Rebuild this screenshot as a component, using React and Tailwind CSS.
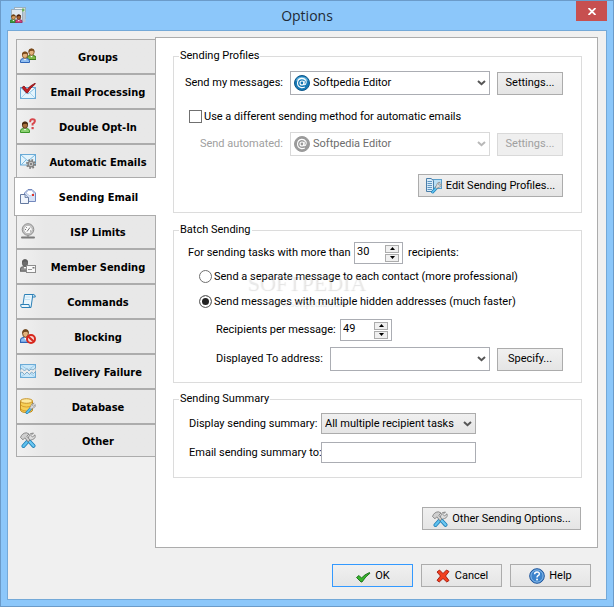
import React, { useState } from 'react';
import clsx from 'clsx';

/* ---------- icons ---------- */

const Icon = ({ children, className }) => (
  <svg width="16" height="16" viewBox="0 0 16 16" aria-hidden="true" className={clsx('shrink-0', className)}>
    {children}
  </svg>
);

const Person = ({ transform, body = '#7fb845', edge = '#3f7a1c', hair = '#7a4a1c', skin = '#e3b27c' }) => (
  <g transform={transform}>
    <path d="M0.5 11.5 V10 Q0.5 7.5 3.5 7.5 H6.5 Q9.5 7.5 9.5 10 V11.5 Z" fill={body} stroke={edge} />
    <path d="M3.5 7.5 L5 9.5 L6.5 7.5 Z" fill="#fff" />
    <ellipse cx="5" cy="4.2" rx="2.6" ry="3.1" fill={skin} stroke={hair} strokeWidth="0.8" />
    <path d="M2 4.6 Q1.6 0.6 5 0.6 Q8.4 0.6 8 4.6 L7 2.8 L3.6 3 Z" fill={hair} />
  </g>
);

const Envelope = ({ y = 3 }) => (
  <g>
    <rect x="0.5" y={y + 0.5} width="15" height="11" fill="#e4f4fc" stroke="#6aaad6" />
    <path d={`M1 ${y + 1} L8 ${y + 7} L15 ${y + 1}`} fill="#fff" stroke="#7ab8e0" />
    <path d={`M1 ${y + 11} L6 ${y + 6} M15 ${y + 11} L10 ${y + 6}`} stroke="#a9d4ee" />
  </g>
);

const GroupsIcon = () => (
  <Icon>
    <Person transform="translate(6.5 0)" />
    <Person transform="translate(0 3)" body="#8fbdf0" edge="#2f66b8" />
  </Icon>
);

const ProcessingIcon = () => (
  <Icon>
    <Envelope y={4} />
    <path d="M2 4.5 L4 3 L7 6.5 Q10 2.5 15 0.3 L15.5 0.8 Q10.5 4.5 7.5 10 H6.5 Z" fill="#c51f22" stroke="#7d0d12" strokeWidth="0.8" />
  </Icon>
);

const OptInIcon = () => (
  <Icon>
    <Person transform="translate(0 3)" body="#8bd070" edge="#3a9628" hair="#4a2a10" skin="#a8703c" />
    <path d="M10.2 4.2 Q10 1.2 12.6 1.2 Q15.2 1.2 14.8 3.6 Q14.4 5.2 12.6 6 V7.6" fill="none" stroke="#d8474c" strokeWidth="2" />
    <rect x="11.5" y="9" width="2.2" height="2.2" fill="#d8474c" />
  </Icon>
);

const AutomaticIcon = () => (
  <Icon>
    <rect x="0.5" y="1.5" width="15" height="10.5" fill="#e4f4fc" stroke="#6aaad6" />
    <path d="M1 2 L8 8 L15 2 M1 12 L6 7" fill="none" stroke="#7ab8e0" />
    <circle cx="11" cy="11" r="4" fill="none" stroke="#7d7d7d" strokeWidth="2" strokeDasharray="1.6 1.54" />
    <circle cx="11" cy="11" r="2.9" fill="#c4c4c4" stroke="#808080" strokeWidth="1.3" />
    <circle cx="11" cy="11" r="1" fill="#6e6e6e" />
  </Icon>
);

const SendingIcon = () => (
  <Icon>
    <path d="M4.5 5 L8 1.5 H12 L15.5 5 V13.5 H4.5 Z" fill="#d7e2f6" stroke="#7388bd" />
    <path d="M6 5 L8.5 2.5 H11.5 L14 5 L10 8 Z" fill="#fff" stroke="#a8b8dd" strokeWidth="0.7" />
    <rect x="12" y="6" width="2" height="2" fill="#e0362c" />
    <path d="M0.5 6.5 H5 L8.5 9.5 V15.5 H0.5 Z" fill="#f1f5fc" stroke="#64799f" />
    <path d="M5 6.5 V9.5 H8.5" fill="#c9d7ef" stroke="#64799f" strokeWidth="0.8" />
  </Icon>
);

const LimitsIcon = () => (
  <Icon>
    <circle cx="8" cy="6.5" r="5.8" fill="#c9c9c9" stroke="#8d8d8d" />
    <circle cx="8" cy="6.5" r="4.2" fill="#fafafa" stroke="#a0a0a0" strokeWidth="0.7" />
    <path d="M7 8.5 L10 4.5 M5 6.5 H6 M6 4 L6.8 4.8 M10 8 H11" stroke="#777" />
    <path d="M8 12.5 V13.5" stroke="#8a8a8a" strokeWidth="2" />
    <rect x="1" y="13.5" width="14" height="2" rx="1" fill="#7b7b7b" />
  </Icon>
);

const MemberIcon = () => (
  <Icon>
    <Person transform="translate(0 0.5) scale(1 1.1)" body="#8f8f8f" edge="#6a6a6a" hair="#5c5c5c" skin="#6c6c6c" />
    <rect x="6.5" y="7.5" width="9" height="7" fill="#fafafa" stroke="#8c8c8c" />
    <path d="M8 11.5 H12" stroke="#999" />
    <rect x="12.5" y="9" width="2" height="1.5" fill="#777" />
  </Icon>
);

const CommandsIcon = () => (
  <Icon>
    <path d="M4.5 1.5 H13 Q15.5 1.5 15.3 4 H12.5 L11 14.5 H2 Q0.5 14.3 0.7 11.5 H3 Z" fill="#eaf6fd" stroke="#2c80b6" />
    <path d="M12.5 4 Q12 1.8 13.3 1.5 M3 11.5 H9 Q8.8 14.5 11 14.5" fill="none" stroke="#2c80b6" />
    <path d="M5.5 4 H10.5 M5 6.5 H10" stroke="#c3e2f3" />
  </Icon>
);

const BlockingIcon = () => (
  <Icon>
    <Person transform="translate(0 0.5) scale(1.1 1.2)" body="#8fbdf0" edge="#2f66b8" hair="#6e451c" />
    <circle cx="11" cy="11" r="4" fill="#f6d4d0" stroke="#d7281e" strokeWidth="2" />
    <path d="M8 8.2 L14 13.8" stroke="#d7281e" strokeWidth="2" />
  </Icon>
);

const FailureIcon = () => (
  <Icon>
    <rect x="0.5" y="1.5" width="15" height="13" fill="#c9e7f9" stroke="#6aaad6" />
    <path d="M1 2 L8 7 L15 2 M1 14 L6 10 M15 14 L10 10" fill="none" stroke="#9ccdec" />
    <path d="M0 6.5 L2 5.5 L4.5 8 L7 5.5 L9 8 L11 6 L13 7 L16 4.5 V8 L13.5 10.5 L11.5 9 L9.5 11.5 L7 9 L4.5 11.5 L2 9 L0 10 Z" fill="#ececec" stroke="#6d9cbd" strokeWidth="0.8" />
  </Icon>
);

const Spanner = ({ transform }) => (
  <g transform={transform}>
    <path d="M8.5 8.5 L3.5 14" stroke="#1d7db5" strokeWidth="4" strokeLinecap="round" />
    <path d="M8.5 8.5 L3.5 14" stroke="#5fc1ee" strokeWidth="2.4" strokeLinecap="round" />
    <path d="M13.5 1 L11 3.5 L12.5 5 L15 2.8 Q16 6.5 12.5 7.5 Q10.5 8 9 9.5 L7 7.5 Q8.8 6 9 4 Q9.5 0.8 13.5 1 Z" fill="#dcdcdc" stroke="#777" strokeWidth="0.8" />
  </g>
);

const DatabaseIcon = () => (
  <Icon>
    <path d="M0.5 3 V12 Q1 14.5 6.5 14.5 Q12.5 14.5 12.5 12 V3 Z" fill="#f6cf55" stroke="#c08a1c" />
    <path d="M1 7 Q2 9 6.5 9 Q11.5 9 12.4 7 M1 11 Q2 13 6.5 13" fill="none" stroke="#d99f2b" />
    <ellipse cx="6.5" cy="3" rx="6" ry="2.3" fill="#fdeaa0" stroke="#c9952a" />
    <Spanner transform="translate(4.5 4.5) scale(0.72)" />
  </Icon>
);

const ToolsIcon = () => (
  <Icon>
    <Spanner />
    <path d="M9.5 9.5 L13.5 13.8" stroke="#1d7db5" strokeWidth="4" strokeLinecap="round" />
    <path d="M9.5 9.5 L13.5 13.8" stroke="#6cc8f2" strokeWidth="2.4" strokeLinecap="round" />
    <path d="M0.5 5.5 Q2 1 6.5 0.8 L9 2 L6.8 4.2 L10 8 L8 9.8 L4.8 5.8 L3 7.8 Z" fill="#cfcfcf" stroke="#777" strokeWidth="0.8" />
  </Icon>
);

const ProfilesIcon = () => (
  <Icon>
    <rect x="6.5" y="1.5" width="9" height="9" fill="#b9def4" stroke="#5a9fca" />
    <path d="M0.5 0.5 H5 L7.5 2.5 V14.5 L5 13.5 H0.5 Z" fill="#d9ecfa" stroke="#4b7ea8" />
    <path d="M1.5 3.5 H6 M1.5 5.5 H6 M1.5 7.5 H6 M1.5 9.5 H6 M1.5 11.5 H6" stroke="#5e95c0" />
    <Spanner transform="translate(4 3.5) scale(0.75)" />
  </Icon>
);

const AtIcon = ({ disabled, className }) => (
  <Icon className={className}>
    <circle cx="8" cy="8" r="7.5" fill={disabled ? '#9b9b9b' : '#1779b5'} stroke={disabled ? '#9b9b9b' : '#0f588c'} />
    {!disabled && <path d="M2 6 Q3 1.8 8 1.8 Q13 1.8 14 6 Q8 3.5 2 6 Z" fill="#5fb1dc" />}
    <circle cx="8" cy="8" r="2" fill="none" stroke="#fff" strokeWidth="1.1" />
    <path d="M10.2 5.8 L9.8 9 Q10.2 10.3 11.5 9.4 Q13 7.5 11.8 5.3 Q10.2 3.2 7.5 3.4 Q3.8 3.9 3.5 8 Q3.6 12 7.5 12.6 Q9.3 12.7 10.8 11.9" fill="none" stroke="#fff" strokeWidth="1.1" />
  </Icon>
);

const TickIcon = () => (
  <Icon>
    <path d="M1.5 9.5 L4 7.5 L6.5 10 Q9.5 6.5 14.5 4.5 L15 5.2 Q10.5 8.5 7 14 H6 Z" fill="#37b62b" stroke="#17691a" strokeWidth="0.9" />
  </Icon>
);

const CrossIcon = () => (
  <Icon>
    <path d="M2 4 L4.5 2 L8 5.5 L11.5 2 L14 3.5 L10.5 8 L14 12.5 L11.8 14 L8 10.5 L4.2 14 L2 12.3 L5.5 8 Z" fill="#f2401f" stroke="#a31508" strokeWidth="0.9" />
  </Icon>
);

const HelpIcon = () => (
  <Icon>
    <circle cx="8" cy="8" r="7.3" fill="#3b83cc" stroke="#1f559b" />
    <circle cx="8" cy="8" r="6.1" fill="none" stroke="#9cc6ee" strokeWidth="0.8" />
    <path d="M5.6 6.3 Q5.6 4 8 4 Q10.4 4 10.3 6 Q10.2 7.2 8.8 7.8 Q8 8.3 8 9.5" fill="none" stroke="#fff" strokeWidth="1.5" />
    <rect x="7.2" y="10.7" width="1.7" height="1.7" fill="#fff" />
  </Icon>
);

const AppIcon = () => (
  <Icon>
    <rect x="4.5" y="0.5" width="11" height="11" fill="#eef3f7" stroke="#9ab0c0" />
    <rect x="1.5" y="2.5" width="11" height="11" fill="#dfe8ef" stroke="#9ab0c0" />
    <rect x="12" y="1.5" width="2.5" height="3" fill="#6fae5c" />
    <rect x="13" y="5" width="2.5" height="10" fill="#b8c6d2" />
    <Person transform="translate(-0.3 7) scale(0.75)" body="#3f9e3a" edge="#226d20" hair="#6a4014" skin="#d99d5c" />
    <Person transform="translate(5 7) scale(0.75)" body="#d3447f" edge="#8f1f50" hair="#4a1e0c" skin="#a5602c" />
  </Icon>
);

const Chevron = ({ disabled }) => (
  <svg width="9" height="6" viewBox="0 0 9 6" aria-hidden="true" className="pointer-events-none absolute right-1 top-1/2 -translate-y-1/2">
    <path d="M1 1 L4.5 4.2 L8 1" fill="none" stroke={disabled ? '#b8b8b8' : '#555'} strokeWidth="2" />
  </svg>
);

/* ---------- controls ---------- */

const Button = ({ children, className, primary, ...props }) => (
  <button
    type="button"
    className={clsx(
      'flex h-[23px] items-center justify-center gap-1 border bg-linear-to-b from-[#f0f0f0] to-[#e5e5e5] whitespace-nowrap disabled:border-[#d9d9d9] disabled:from-[#efefef] disabled:to-[#efefef] disabled:text-[#a0a0a0]',
      primary ? 'border-[#3399ff]' : 'border-[#acacac]',
      className
    )}
    {...props}
  >
    {children}
  </button>
);

const Select = ({ id, options, icon, disabled, className, gray }) => (
  <div className={clsx('relative', className)}>
    {icon && <span className="pointer-events-none absolute left-1 top-1/2 -translate-y-1/2">{icon}</span>}
    <select
      id={id}
      disabled={disabled}
      className={clsx(
        'block w-full appearance-none border pr-4 disabled:border-[#d9d9d9] disabled:text-[#6d6d6d] disabled:opacity-100',
        gray ? 'h-[21px] border-[#acacac] bg-linear-to-b from-[#f0f0f0] to-[#e5e5e5]' : 'h-6 border-[#abadb3] bg-white',
        icon ? 'pl-[22px]' : 'pl-[3px]'
      )}
    >
      {options.map((o) => (
        <option key={o}>{o}</option>
      ))}
    </select>
    <Chevron disabled={disabled} />
  </div>
);

const Spinner = ({ id, initial, className }) => {
  const [value, setValue] = useState(initial);
  const arrow = 'flex h-[8px] w-[14px] items-center justify-center border border-[#acacac] bg-[#f0f0f0]';
  return (
    <div className={clsx('flex h-[22px] border border-[#abadb3] bg-white pr-[3px]', className)}>
      <input
        id={id}
        type="text"
        inputMode="numeric"
        value={value}
        onChange={(e) => setValue(Number(e.target.value) || 0)}
        className="w-0 flex-1 pb-[2px] pl-[2px] outline-none"
      />
      <div className="flex flex-col justify-center gap-px">
        <button type="button" aria-label="Increase" className={arrow} onClick={() => setValue(value + 1)}>
          <svg width="5" height="3" viewBox="0 0 5 3"><path d="M0 3 L2.5 0 L5 3 Z" /></svg>
        </button>
        <button type="button" aria-label="Decrease" className={arrow} onClick={() => setValue(value - 1)}>
          <svg width="5" height="3" viewBox="0 0 5 3"><path d="M0 0 L2.5 3 L5 0 Z" /></svg>
        </button>
      </div>
    </div>
  );
};

const Radio = ({ label, ...props }) => (
  <label className="flex h-[25px] items-center gap-[2px] pl-[25px]">
    <input
      type="radio"
      name="method"
      className="size-[13px] appearance-none rounded-full border border-[#707070] bg-white checked:bg-[#222] checked:shadow-[inset_0_0_0_2px_white]"
      {...props}
    />
    {label}
  </label>
);

const Group = ({ title, children, className }) => (
  <fieldset className={clsx('relative border border-[#dcdcdc] whitespace-nowrap', className)}>
    <legend className="ml-[5px] px-px leading-[14px]">{title}</legend>
    {children}
  </fieldset>
);

const tabs = [
  { name: 'Groups', icon: <GroupsIcon /> },
  { name: 'Email Processing', icon: <ProcessingIcon /> },
  { name: 'Double Opt-In', icon: <OptInIcon /> },
  { name: 'Automatic Emails', icon: <AutomaticIcon /> },
  { name: 'Sending Email', icon: <SendingIcon /> },
  { name: 'ISP Limits', icon: <LimitsIcon /> },
  { name: 'Member Sending', icon: <MemberIcon /> },
  { name: 'Commands', icon: <CommandsIcon /> },
  { name: 'Blocking', icon: <BlockingIcon /> },
  { name: 'Delivery Failure', icon: <FailureIcon /> },
  { name: 'Database', icon: <DatabaseIcon /> },
  { name: 'Other', icon: <ToolsIcon /> },
];

const Sidebar = ({ active, onSelect }) => (
  <nav className="flex w-[139px] shrink-0 flex-col pt-[2px] font-['DejaVu_Sans_Condensed','DejaVu_Sans',sans-serif]">
    {tabs.map(({ name, icon }) => (
      <button
        key={name}
        type="button"
        onClick={() => onSelect(name)}
        className={clsx(
          'flex items-center border-y border-l border-[#acacac] font-bold last:h-[33px]',
          name === active
            ? 'z-10 -my-[2px] -mr-px -ml-[2px] h-[39px] bg-white pl-[5px]'
            : 'h-[35px] bg-linear-to-r from-[#f0f0f0] to-[#e8e8e8] to-20% pl-[3px]'
        )}
      >
        <span className="pb-[2px]">{icon}</span>
        <span className="ml-[5px] flex-1 pt-[2px] text-center">{name}</span>
      </button>
    ))}
  </nav>
);

const Watermark = () => (
  <div aria-hidden="true" className="pointer-events-none absolute top-[34px] left-[66px] w-[132px] text-center font-['Liberation_Serif',serif] text-white/30 select-none [text-shadow:1px_1px_1px_rgb(0_0_0/0.12)]">
    <div className="text-[22px] leading-6">SOFTPEDIA</div>
    <div className="text-[10px] leading-4">www.softpedia.com</div>
  </div>
);

export default function App() {
  const [active, setActive] = useState('Sending Email');

  return (
    <div className="flex min-h-screen flex-col border border-[#6b9bc9] bg-[#8cc7fa] font-['Roboto',sans-serif] text-[11px] leading-[14px] text-black">
      <header className="relative flex h-[29px] items-center justify-center">
        <span className="absolute top-[6px] left-[9px]"><AppIcon /></span>
        <h1 className="font-['Open_Sans',sans-serif] text-[14px] leading-5 text-[#1e2a36]">Options</h1>
        <button type="button" aria-label="Close" className="absolute top-0 right-[6px] flex h-5 w-[31px] items-center justify-center bg-[#c75050]">
          <svg width="8" height="7" viewBox="0 0 8 7"><path d="M0.5 0 L7.5 7 M7.5 0 L0.5 7" stroke="#fff" strokeWidth="1.8" /></svg>
        </button>
      </header>

      <main className="mx-[6px] mb-[6px] flex flex-1 flex-col border border-[#74a9d8] bg-[#f0f0f0]">
        <div className="flex flex-1 px-2 pt-[6px]">
          <Sidebar active={active} onSelect={setActive} />

          <section className="flex flex-1 flex-col border border-[#acacac] bg-white pt-[11px] pr-[15px] pb-[17px] pl-[17px]">
            <Group title="Sending Profiles" className="pr-[18px] pb-[15px]">
              <div className="flex items-center pt-2">
                <label htmlFor="profile" className="w-[109px] text-right">Send my messages:</label>
                <Select id="profile" className="ml-[7px] flex-1" icon={<AtIcon />} options={['Softpedia Editor']} />
                <Button className="ml-[7px] w-[66px]">Settings...</Button>
              </div>
              <label className="mt-[13px] flex h-[17px] items-center gap-[2px] pl-[15px]">
                <input type="checkbox" className="size-[13px] appearance-none border border-[#707070] bg-white checked:bg-[#707070]" />
                Use a different sending method for automatic emails
              </label>
              <div className="mt-[7px] flex items-center">
                <label htmlFor="auto-profile" className="w-[109px] text-right text-[#a0a0a0]">Send automated:</label>
                <Select id="auto-profile" className="ml-[7px] flex-1" icon={<AtIcon disabled />} options={['Softpedia Editor']} disabled />
                <Button className="ml-[7px] w-[66px]" disabled>Settings...</Button>
              </div>
              <Button className="mt-[18px] ml-auto w-[145px]">
                <ProfilesIcon />
                Edit Sending Profiles...
              </Button>
            </Group>

            <Group title="Batch Sending" className="mt-[10px] pr-[18px] pb-[11px]">
              <div className="flex items-center pt-[5px] pl-[14px]">
                <label htmlFor="threshold" className="w-[166px]">For sending tasks with more than</label>
                <Spinner id="threshold" initial={30} className="w-[49px]" />
                <span className="ml-[5px]">recipients:</span>
              </div>
              <Radio label="Send a separate message to each contact (more professional)" />
              <Radio label="Send messages with multiple hidden addresses (much faster)" defaultChecked />
              <div className="flex items-center pt-[5px] pl-[42px]">
                <label htmlFor="per-message" className="w-[124px]">Recipients per message:</label>
                <Spinner id="per-message" initial={49} className="w-[52px]" />
              </div>
              <div className="flex items-center pt-[6px] pl-[42px]">
                <label htmlFor="to-address" className="w-[114px]">Displayed To address:</label>
                <Select id="to-address" className="flex-1" options={['']} />
                <Button className="ml-[7px] w-[66px]">Specify...</Button>
              </div>
              <Watermark />
            </Group>

            <Group title="Sending Summary" className="mt-[9px] pr-[105px] pb-[14px]">
              <div className="flex items-center pt-[7px] pl-[15px]">
                <label htmlFor="summary" className="w-[132px]">Display sending summary:</label>
                <Select id="summary" className="flex-1" options={['All multiple recipient tasks']} gray />
              </div>
              <div className="flex items-center pt-2 pl-[15px]">
                <label htmlFor="summary-to" className="w-[132px]">Email sending summary to:</label>
                <input id="summary-to" type="text" className="h-[21px] w-0 flex-1 border border-[#abadb3] bg-white px-1" />
              </div>
            </Group>

            <Button className="mt-auto mr-px ml-auto w-[159px]">
              <ToolsIcon />
              Other Sending Options...
            </Button>
          </section>
        </div>

        <footer className="flex justify-end gap-2 pt-4 pr-[15px] pb-3">
          <Button className="w-[81px]" primary><TickIcon />OK</Button>
          <Button className="w-[81px]"><CrossIcon />Cancel</Button>
          <Button className="w-[81px]"><HelpIcon />Help</Button>
        </footer>
      </main>
    </div>
  );
}
